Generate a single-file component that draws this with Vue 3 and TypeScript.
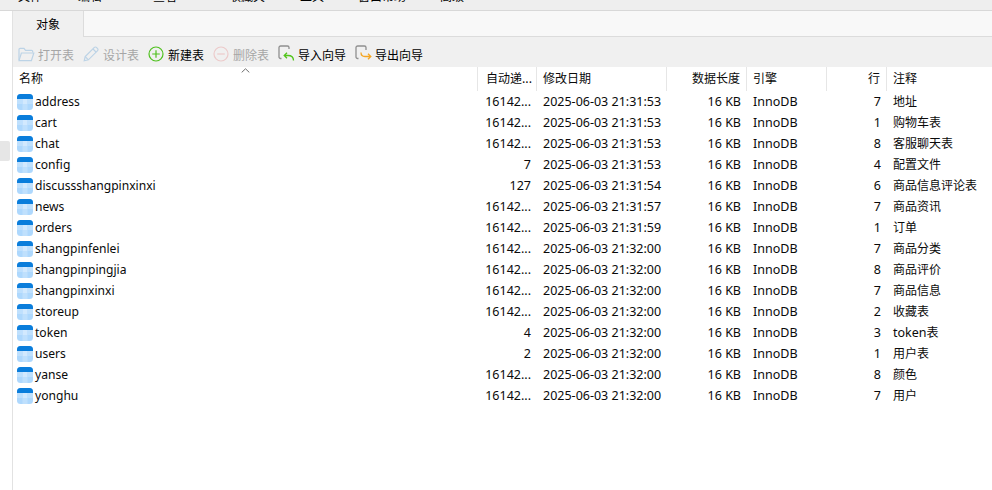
<script setup lang="ts">
interface Row {
  name: string
  auto: string
  date: string
  rows: number
  prefix?: string
  note: string
}

const menus = [
  { label: '文件', width: 60 },
  { label: '编辑', width: 75 },
  { label: '查看', width: 76 },
  { label: '收藏夹', width: 71 },
  { label: '工具', width: 58 },
  { label: '窗口帮助', width: 82 },
  { label: '高级', width: 60 },
]

const tableRows: Row[] = [
  { name: 'address', auto: '16142...', date: '2025-06-03 21:31:53', rows: 7, note: '地址' },
  { name: 'cart', auto: '16142...', date: '2025-06-03 21:31:53', rows: 1, note: '购物车表' },
  { name: 'chat', auto: '16142...', date: '2025-06-03 21:31:53', rows: 8, note: '客服聊天表' },
  { name: 'config', auto: '7', date: '2025-06-03 21:31:53', rows: 4, note: '配置文件' },
  { name: 'discussshangpinxinxi', auto: '127', date: '2025-06-03 21:31:54', rows: 6, note: '商品信息评论表' },
  { name: 'news', auto: '16142...', date: '2025-06-03 21:31:57', rows: 7, note: '商品资讯' },
  { name: 'orders', auto: '16142...', date: '2025-06-03 21:31:59', rows: 1, note: '订单' },
  { name: 'shangpinfenlei', auto: '16142...', date: '2025-06-03 21:32:00', rows: 7, note: '商品分类' },
  { name: 'shangpinpingjia', auto: '16142...', date: '2025-06-03 21:32:00', rows: 8, note: '商品评价' },
  { name: 'shangpinxinxi', auto: '16142...', date: '2025-06-03 21:32:00', rows: 7, note: '商品信息' },
  { name: 'storeup', auto: '16142...', date: '2025-06-03 21:32:00', rows: 2, note: '收藏表' },
  { name: 'token', auto: '4', date: '2025-06-03 21:32:00', rows: 3, prefix: 'token', note: '表' },
  { name: 'users', auto: '2', date: '2025-06-03 21:32:00', rows: 1, note: '用户表' },
  { name: 'yanse', auto: '16142...', date: '2025-06-03 21:32:00', rows: 8, note: '颜色' },
  { name: 'yonghu', auto: '16142...', date: '2025-06-03 21:32:00', rows: 7, note: '用户' },
]
</script>

<template>
  <div class="page">
    <div class="menubar">
      <span v-for="m in menus" :key="m.label" class="menu" :style="{ width: m.width + 'px' }">{{ m.label }}</span>
    </div>

    <div class="workspace">
      <aside class="rail"><div class="thumb"></div></aside>

      <main class="panel">
        <div class="tabs">
          <div class="tab">对象</div>
        </div>

        <div class="toolbar">
          <div class="tool off tight">
            <svg width="17" height="15" viewBox="0 0 17 15" fill="none" stroke="#bcd3e6" stroke-width="1.2">
              <path d="M1 13V2.5A1.2 1.2 0 0 1 2.2 1.3H6l1.5 2h6A1.2 1.2 0 0 1 14.7 4.5V5.5" />
              <path d="M1 13.6 3.4 6h12.4l-2.4 7.6Z" />
            </svg>
            <span>打开表</span>
          </div>
          <div class="tool off">
            <svg width="16" height="16" viewBox="0 0 16 16" fill="none" stroke="#bcd3e6" stroke-width="1.2">
              <path d="M1.2 14.8 2.2 10.6 11.4 1.4a1.4 1.4 0 0 1 2 0l1.2 1.2a1.4 1.4 0 0 1 0 2L5.4 13.8Z" />
              <path d="M2.2 10.6 5.4 13.8M10 3l3 3" />
            </svg>
            <span>设计表</span>
          </div>
          <div class="tool">
            <svg width="16" height="16" viewBox="0 0 16 16" fill="none" stroke="#4fc01e" stroke-width="1.2">
              <circle cx="8" cy="8" r="7" />
              <path d="M8 4.2v7.6M4.2 8h7.6" />
            </svg>
            <span>新建表</span>
          </div>
          <div class="tool off">
            <svg width="16" height="16" viewBox="0 0 16 16" fill="none" stroke="#eccaca" stroke-width="1.2">
              <circle cx="8" cy="8" r="7" />
              <path d="M4.2 8h7.6" />
            </svg>
            <span>删除表</span>
          </div>
          <div class="tool tight">
            <svg class="wizard-icon" width="17" height="17" viewBox="0 0 17 17" fill="none" stroke-width="1.3">
              <path d="M3.5 13.5H2.6A1.6 1.6 0 0 1 1 11.9V2.6A1.6 1.6 0 0 1 2.6 1h6.8a1.6 1.6 0 0 1 1.6 1.6V4" stroke="#8f8f8f" />
              <path d="M15.5 15.5c0-3.5-2-5-5.6-5H6.3M9 7.7 6.2 10.5 9 13.3" stroke="#52c41a" />
            </svg>
            <span>导入向导</span>
          </div>
          <div class="tool tight">
            <svg class="wizard-icon" width="17" height="17" viewBox="0 0 17 17" fill="none" stroke-width="1.3">
              <path d="M3.5 13.5H2.6A1.6 1.6 0 0 1 1 11.9V2.6A1.6 1.6 0 0 1 2.6 1h6.8a1.6 1.6 0 0 1 1.6 1.6V5" stroke="#8f8f8f" />
              <path d="M6 7.5c0 2.5 1.4 4 4 4h5.6M13 8.8l2.8 2.7L13 14.3" stroke="#f5a623" />
            </svg>
            <span>导出向导</span>
          </div>
        </div>

        <div class="grid">
          <div class="row head">
            <div class="cell c-name">
              名称
              <svg class="caret" width="9" height="5" viewBox="0 0 9 5" fill="none" stroke="#6f6f6f" stroke-width="1">
                <path d="M.7 4.4 4.5.8l3.8 3.6" />
              </svg>
            </div>
            <div class="cell c-auto left">自动递...</div>
            <div class="cell c-date">修改日期</div>
            <div class="cell c-size">数据长度</div>
            <div class="cell c-engine">引擎</div>
            <div class="cell c-rows">行</div>
            <div class="cell c-note">注释</div>
          </div>

          <div v-for="r in tableRows" :key="r.name" class="row">
            <div class="cell c-name">
              <svg class="table-icon" width="16" height="16" viewBox="0 0 16 16">
                <rect width="16" height="16" rx="3.5" fill="#aed8fd" />
                <path d="M0 3.5A3.5 3.5 0 0 1 3.5 0h9A3.5 3.5 0 0 1 16 3.5V5H0Z" fill="#0a7ddb" />
                <path d="M5.5 5h5v5h-5Z" fill="#d2e9fe" />
                <path d="M0 5h5.5v5H0ZM10.5 5H16v5h-5.5ZM5.5 10h5v6h-5Z" fill="#bfe0fd" />
              </svg>
              <span class="latin name">{{ r.name }}</span>
            </div>
            <div class="cell c-auto latin">{{ r.auto }}</div>
            <div class="cell c-date latin">{{ r.date }}</div>
            <div class="cell c-size latin">16 KB</div>
            <div class="cell c-engine latin">InnoDB</div>
            <div class="cell c-rows latin">{{ r.rows }}</div>
            <div class="cell c-note"><span v-if="r.prefix" class="latin">{{ r.prefix }}</span><span class="cjk">{{ r.note }}</span></div>
          </div>
        </div>
      </main>
    </div>
  </div>
</template>

<style>
html,
body {
  margin: 0;
  background: #fff;
}
</style>

<style scoped>
.page {
  width: 992px;
  height: 490px;
  overflow: hidden;
  display: flex;
  flex-direction: column;
  font-family: "Noto Sans CJK SC", "Noto Sans", sans-serif;
  font-size: 12px;
  color: #0a0a0a;
  background: #fff;
}

.menubar {
  flex: none;
  height: 10px;
  padding-left: 18px;
  display: flex;
  align-items: flex-end;
  overflow: hidden;
  background: #eeeeee;
  border-bottom: 1px solid #d8d8d8;
}

.menu {
  flex: none;
  height: 3px;
  margin-bottom: 11px;
  line-height: 0;
  font-size: 12px;
  color: #000;
  white-space: nowrap;
}

.workspace {
  flex: 1;
  min-height: 0;
  display: flex;
}

.rail {
  flex: none;
  width: 13px;
  display: flex;
  flex-direction: column;
  padding-top: 130px;
  box-sizing: border-box;
  border-right: 1px solid #e2e2e2;
}

.thumb {
  width: 10px;
  height: 20px;
  background: #e6e6e6;
  border-radius: 0 2px 2px 0;
}

.panel {
  flex: 1;
  min-width: 0;
  display: flex;
  flex-direction: column;
}

.tabs {
  flex: none;
  height: 25px;
  display: flex;
  background: #f8f8f8;
  border-bottom: 1px solid #dcdcdc;
}

.tab {
  width: 70px;
  height: 26px;
  line-height: 26px;
  text-align: center;
  background: #f0f0f0;
  border-right: 1px solid #dcdcdc;
  color: #000;
}

.toolbar {
  flex: none;
  height: 30px;
  box-sizing: border-box;
  padding: 4px 0 0 5px;
  display: flex;
  align-items: center;
  gap: 9px;
  background: #f0f0f0;
}

.tool {
  display: flex;
  align-items: center;
  gap: 4px;
  color: #000;
}

.wizard-icon {
  margin-top: -2px;
}

.tool.off {
  color: #a6a6a6;
}

.tool.tight {
  gap: 3px;
}

.grid {
  flex: 1;
  min-height: 0;
  display: flex;
  flex-direction: column;
}

.row {
  flex: none;
  height: 21px;
  display: grid;
  grid-template-columns: 465px 59px 130px 80px 80px 60px 1fr;
}

.row.head {
  height: 24px;
}

.cell {
  position: relative;
  display: flex;
  align-items: center;
  padding: 0 6px;
  white-space: nowrap;
  overflow: hidden;
  box-sizing: border-box;
}

.head .cell {
  border-right: 1px solid #e6e6e6;
  padding-bottom: 3px;
}

.head .c-note {
  border-right: 0;
}

.c-name {
  padding-left: 4px;
}

.head .c-name {
  padding-left: 6px;
  overflow: visible;
}

.c-auto,
.c-size,
.c-rows {
  justify-content: flex-end;
}

.c-auto.left {
  justify-content: flex-start;
  padding-left: 8px;
}

.table-icon {
  flex: none;
  margin-right: 2px;
}

.latin {
  font-family: "Noto Sans", sans-serif;
  font-size: 12.5px;
}

.latin.name {
  font-size: 12.1px;
}

.cjk {
  margin-bottom: 2px;
}

.caret {
  position: absolute;
  left: 228px;
  top: 1px;
}
</style>
